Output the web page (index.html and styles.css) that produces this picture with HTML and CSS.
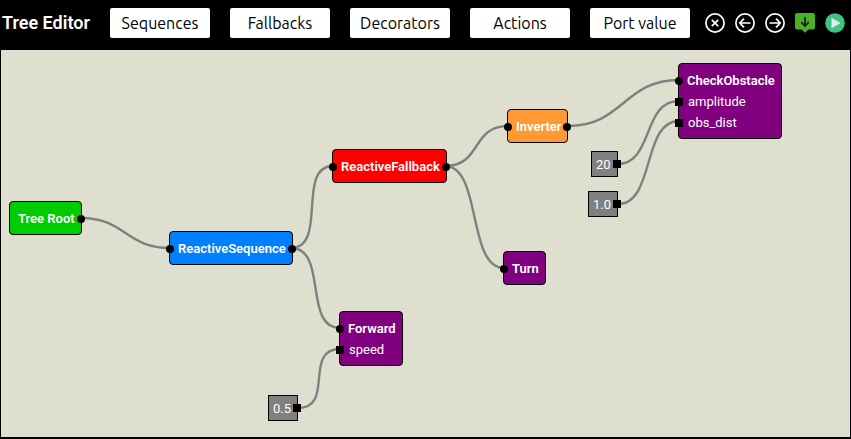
FILE: index.html
```html
<!DOCTYPE html>
<html lang="en">
<head>
<meta charset="utf-8">
<meta name="viewport" content="width=device-width, initial-scale=1">
<title>Tree Editor</title>
<link rel="stylesheet" href="styles.css">
</head>
<body>
<header class="toolbar">
  <h1 class="title">Tree Editor</h1>
  <nav class="menu" aria-label="Node types">
    <button type="button" class="menu-button">Sequences</button>
    <button type="button" class="menu-button">Fallbacks</button>
    <button type="button" class="menu-button">Decorators</button>
    <button type="button" class="menu-button">Actions</button>
    <button type="button" class="menu-button">Port value</button>
  </nav>
  <div class="tools">
    <button type="button" class="tool" aria-label="Clear">
      <svg viewBox="0 0 20 20"><circle class="stroke" cx="10" cy="10" r="9.1"/><path class="stroke" d="M6.800 6.800l6.400 6.400M13.200 6.800l-6.400 6.400"/></svg>
    </button>
    <button type="button" class="tool" aria-label="Undo">
      <svg viewBox="0 0 20 20"><circle class="stroke" cx="10" cy="10" r="9.1"/><path class="stroke" d="M15.5 10H5M9 5.7L4.8 10L9 14.3"/></svg>
    </button>
    <button type="button" class="tool" aria-label="Redo">
      <svg viewBox="0 0 20 20"><circle class="stroke" cx="10" cy="10" r="9.1"/><path class="stroke" d="M4.5 10H15M11 5.7L15.2 10L11 14.3"/></svg>
    </button>
    <button type="button" class="tool" aria-label="Download">
      <svg viewBox="0 0 20 20"><path fill="#4caf27" d="M2 0H18Q20 0 20 2V14.500Q20 16.500 18 16.500H13.500L10 19.800L6.500 16.500H2Q0 16.500 0 14.500V2Q0 0 2 0Z"/><path class="arrow" d="M10 4V13M6.200 9.200L10 13L13.800 9.200"/></svg>
    </button>
    <button type="button" class="tool" aria-label="Run">
      <svg viewBox="0 0 20 20"><circle cx="10" cy="10" r="9.8" fill="#3dc384"/><path fill="#e6e9ee" d="M6.500 4.700L15.500 10L6.500 15.300Z"/></svg>
    </button>
  </div>
</header>
<main class="canvas">
  <svg class="links" aria-hidden="true">
    <path d="M80 168C124 168 125 198 169 198"/>
    <path d="M290 198C327 198 295 116 332 116"/>
    <path d="M290 198C327 198 302 278 339 278"/>
    <path d="M444 116C481 116 470 76 507 76"/>
    <path d="M444 116C481 116 466 218 503 218"/>
    <path d="M567 76C622 76 623 30 678 30"/>
    <path d="M616 114C653 114 641 51 678 51"/>
    <path d="M617 154C654 154 641 71 678 71"/>
    <path d="M297 358C334 358 302 299 339 299"/>
  </svg>

  <section class="node root">
    <h2 class="row name">Tree Root<i class="port out"></i></h2>
  </section>
  <section class="node sequence">
    <h2 class="row name"><i class="port in"></i>ReactiveSequence<i class="port out"></i></h2>
  </section>
  <section class="node fallback">
    <h2 class="row name"><i class="port in"></i>ReactiveFallback<i class="port out"></i></h2>
  </section>
  <section class="node inverter">
    <h2 class="row name"><i class="port in"></i>Inverter<i class="port out"></i></h2>
  </section>
  <section class="node action check">
    <h2 class="row name"><i class="port in"></i>CheckObstacle</h2>
    <div class="row input"><i class="port data in"></i>amplitude</div>
    <div class="row input"><i class="port data in"></i>obs_dist</div>
  </section>
  <section class="node action turn">
    <h2 class="row name"><i class="port in"></i>Turn</h2>
  </section>
  <section class="node action forward">
    <h2 class="row name"><i class="port in"></i>Forward</h2>
    <div class="row input"><i class="port data in"></i>speed</div>
  </section>
  <div class="value amplitude-value"><input class="field short" type="text" value="20" aria-label="amplitude"><i class="port data out"></i></div>
  <div class="value distance-value"><input class="field" type="text" value="1.0" aria-label="obs_dist"><i class="port data out"></i></div>
  <div class="value speed-value"><input class="field" type="text" value="0.5" aria-label="speed"><i class="port data out"></i></div>
</main>
</body>
</html>
```

FILE: styles.css
```css
* {
  box-sizing: border-box;
}

body {
  display: flex;
  flex-direction: column;
  min-height: 100vh;
  margin: 0;
  background: #000;
  color: #fff;
  font-family: Roboto, "Liberation Sans", sans-serif;
}

.toolbar {
  display: flex;
  align-items: center;
  padding: 8px 0 12px 2px;
}

.title {
  flex: 0 0 108px;
  margin: 0;
  font-size: 18px;
  font-weight: 600;
  line-height: 30px;
  white-space: nowrap;
}

.menu {
  display: flex;
  gap: 20px;
}

.menu-button {
  width: 100px;
  height: 30px;
  padding: 0;
  border: 0;
  border-radius: 2px;
  background: #fff;
  color: #000;
  font-family: Ubuntu, "Noto Sans", sans-serif;
  font-size: 16px;
  font-weight: 400;
  line-height: 28px;
}

.tools {
  display: flex;
  gap: 10px;
  margin-left: 15px;
}

.tool {
  width: 20px;
  height: 20px;
  padding: 0;
  border: 0;
  background: none;
}

.tool svg {
  display: block;
  width: 20px;
  height: 20px;
}

.stroke {
  fill: none;
  stroke: #fff;
  stroke-width: 1.7;
}

.arrow {
  fill: none;
  stroke: #10240a;
  stroke-width: 1.7;
}

.canvas {
  position: relative;
  flex: 1;
  border: solid #000;
  border-width: 0 1px 2px;
  background: #dfdfd0;
}

.links {
  position: absolute;
  inset: 0;
  width: 100%;
  height: 100%;
  fill: none;
  stroke: #808080;
  stroke-width: 2.4;
}

.node {
  position: absolute;
  padding: 6px 0 5px;
  border: 1px solid #000;
  border-radius: 4px;
}

.row {
  position: relative;
  margin: 0;
  padding: 0 6px 0 8px;
  font-size: 13px;
  font-weight: 400;
  line-height: 21px;
  white-space: nowrap;
}

.name {
  font-weight: 600;
}

.input {
  padding-left: 9px;
}

.port {
  position: absolute;
  top: 50%;
  width: 8px;
  height: 8px;
  margin-top: -4px;
  border-radius: 50%;
  background: #000;
}

.data {
  border-radius: 0;
}

.in {
  left: -4px;
}

.out {
  right: -4px;
}

.value {
  position: absolute;
  padding: 0 6px 0 4px;
  border: 1px solid #000;
  background: #808080;
}

.field {
  display: block;
  width: 18px;
  height: 24px;
  padding: 0;
  border: 0;
  background: none;
  color: #fff;
  font-family: inherit;
  font-size: 13px;
}

.short {
  width: 15px;
}

/* Node colours and places on the canvas */

.root {
  left: 8px;
  top: 151px;
  background: #00cc00;
}

.sequence {
  left: 168px;
  top: 181px;
  background: #0080ff;
}

.fallback {
  left: 331px;
  top: 99px;
  background: #ff0000;
}

.inverter {
  left: 506px;
  top: 59px;
  background: #ff9933;
}

.action {
  background: #800080;
}

.check {
  left: 677px;
  top: 13px;
}

.turn {
  left: 502px;
  top: 201px;
}

.forward {
  left: 338px;
  top: 261px;
}

.amplitude-value {
  left: 590px;
  top: 101px;
}

.distance-value {
  left: 587px;
  top: 141px;
}

.speed-value {
  left: 267px;
  top: 345px;
}
```
